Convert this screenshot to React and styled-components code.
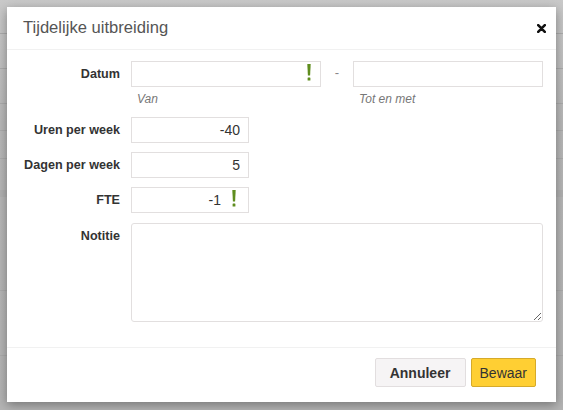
import React from "react";
import styled, { createGlobalStyle } from "styled-components";

const GlobalStyle = createGlobalStyle`
  html, body { margin: 0; padding: 0; }
  body {
    font-family: "Liberation Sans", Arial, Helvetica, sans-serif;
    color: #333;
    background: #bababa;
  }
  * { box-sizing: border-box; }
`;

const Backdrop = styled.div`
  width: 563px;
  height: 410px;
  padding: 7px 7px 8px 7px;
  background-color: #b9b9b9;
  background-image:
    linear-gradient(#ababab, #ababab),
    linear-gradient(#ababab, #ababab),
    linear-gradient(#ababab, #ababab),
    linear-gradient(#ababab, #ababab),
    linear-gradient(#ababab, #ababab),
    linear-gradient(#b1b1b1, #b1b1b1),
    linear-gradient(#ababab, #ababab),
    linear-gradient(#ababab, #ababab),
    linear-gradient(180deg, #c9c9c9 0%, #b8b8b8 30%, #b4b4b4 100%);
  background-size:
    100% 1px, 100% 1px, 100% 1px, 100% 1px, 100% 1px, 100% 7px, 100% 1px, 100% 1px, 100% 100%;
  background-position:
    0 33px, 0 68px, 0 103px, 0 130px, 0 158px, 0 190px, 0 290px, 0 355px, 0 0;
  background-repeat: no-repeat;
`;

const Modal = styled.div`
  width: 549px;
  height: 395px;
  background: #fff;
  box-shadow: 0 3px 10px rgba(0, 0, 0, 0.35);
  display: flex;
  flex-direction: column;
`;

const Header = styled.div`
  height: 43px;
  flex: none;
  display: flex;
  align-items: center;
  justify-content: space-between;
  padding: 0 10px 0 16px;
  border-bottom: 1px solid #f1f1f1;
`;

const Title = styled.h4`
  margin: 0;
  font-size: 16.6px;
  font-weight: normal;
  color: #555;
  line-height: 20px;
`;

const CloseButton = styled.button`
  border: 0;
  background: none;
  padding: 0;
  width: 9px;
  height: 9px;
  display: flex;
  cursor: pointer;
`;

const Body = styled.div`
  flex: 1;
  padding: 11px 13px 0 0;
  display: flex;
  flex-direction: column;
`;

const Row = styled.div`
  display: flex;
  align-items: flex-start;
  margin-bottom: ${(p) => p.$gap}px;
`;

const Label = styled.label`
  width: 113px;
  flex: none;
  margin-right: 11px;
  text-align: right;
  font-weight: bold;
  font-size: 12.6px;
  line-height: 26px;
  color: #333;
`;

const DateGrid = styled.div`
  display: grid;
  grid-template-columns: 190px 32px 190px;
  row-gap: 4px;
`;

const Dash = styled.span`
  text-align: center;
  font-size: 13px;
  line-height: 24px;
  color: #888;
`;

const Help = styled.span`
  font-style: italic;
  font-size: 12px;
  line-height: 16px;
  color: #777;
  padding-left: 6px;
`;

const FieldWrap = styled.div`
  position: relative;
  width: ${(p) => p.$w}px;
  height: 26px;
`;

const Input = styled.input`
  width: 100%;
  height: 26px;
  border: 1px solid #e2dfdf;
  border-radius: 0;
  background: #fff;
  font-family: inherit;
  font-size: 14px;
  color: #333;
  text-align: right;
  padding: 0 ${(p) => p.$pr}px 0 6px;
  outline: none;
`;

const Warn = styled.span`
  position: absolute;
  right: ${(p) => p.$r}px;
  top: 3px;
  width: 4px;
  height: 17px;
  display: flex;
`;

const TextArea = styled.textarea`
  width: 412px;
  height: 99px;
  border: 1px solid #e2dfdf;
  border-radius: 3px;
  font-family: inherit;
  font-size: 14px;
  padding: 6px;
  resize: both;
  outline: none;
`;

const Footer = styled.div`
  flex: none;
  border-top: 1px solid #f1f1f1;
  padding: 10px 20px 15px;
  display: flex;
  justify-content: flex-end;
  align-items: center;
  gap: 5px;
`;

const Button = styled.button`
  height: 29px;
  padding: 0 ${(p) => (p.$primary ? 8 : 14)}px;
  min-width: ${(p) => (p.$primary ? 64 : 91)}px;
  border: 1px solid ${(p) => (p.$primary ? "#d6aa2a" : "#e2dedf")};
  background: ${(p) => (p.$primary ? "#ffcf33" : "#f6f4f5")};
  border-radius: 2px;
  font-family: inherit;
  font-size: 14px;
  font-weight: ${(p) => (p.$primary ? "normal" : "bold")};
  color: #333;
  cursor: pointer;
`;

const ExclamationIcon = () => (
  <svg width="4" height="17" viewBox="0 0 4 17">
    <path d="M0.3 0 H3.7 L3.1 11.5 H0.9 Z" fill="#5f8d1e" />
    <rect x="0.6" y="13.6" width="2.8" height="3" rx="0.4" fill="#5f8d1e" />
  </svg>
);

const CloseIcon = () => (
  <svg width="9" height="9" viewBox="0 0 9 9">
    <path d="M1.2 1.2 L7.8 7.8 M7.8 1.2 L1.2 7.8" stroke="#111" strokeWidth="2.6" strokeLinecap="round" />
  </svg>
);

export default function App() {
  return (
    <>
      <GlobalStyle />
      <Backdrop>
        <Modal>
          <Header>
            <Title>Tijdelijke uitbreiding</Title>
            <CloseButton aria-label="Sluiten">
              <CloseIcon />
            </CloseButton>
          </Header>
          <Body>
            <Row $gap={10}>
              <Label>Datum</Label>
              <DateGrid>
                <FieldWrap $w={190}>
                  <Input $pr={20} defaultValue="" />
                  <Warn $r={10}>
                    <ExclamationIcon />
                  </Warn>
                </FieldWrap>
                <Dash>-</Dash>
                <FieldWrap $w={190}>
                  <Input $pr={8} defaultValue="" />
                </FieldWrap>
                <Help>Van</Help>
                <span />
                <Help>Tot en met</Help>
              </DateGrid>
            </Row>
            <Row $gap={9}>
              <Label>Uren per week</Label>
              <FieldWrap $w={118}>
                <Input $pr={8} defaultValue="-40" />
              </FieldWrap>
            </Row>
            <Row $gap={9}>
              <Label>Dagen per week</Label>
              <FieldWrap $w={118}>
                <Input $pr={8} defaultValue="5" />
              </FieldWrap>
            </Row>
            <Row $gap={10}>
              <Label>FTE</Label>
              <FieldWrap $w={118}>
                <Input $pr={27} defaultValue="-1" />
                <Warn $r={13}>
                  <ExclamationIcon />
                </Warn>
              </FieldWrap>
            </Row>
            <Row $gap={0}>
              <Label>Notitie</Label>
              <TextArea />
            </Row>
          </Body>
          <Footer>
            <Button>Annuleer</Button>
            <Button $primary>Bewaar</Button>
          </Footer>
        </Modal>
      </Backdrop>
    </>
  );
}
